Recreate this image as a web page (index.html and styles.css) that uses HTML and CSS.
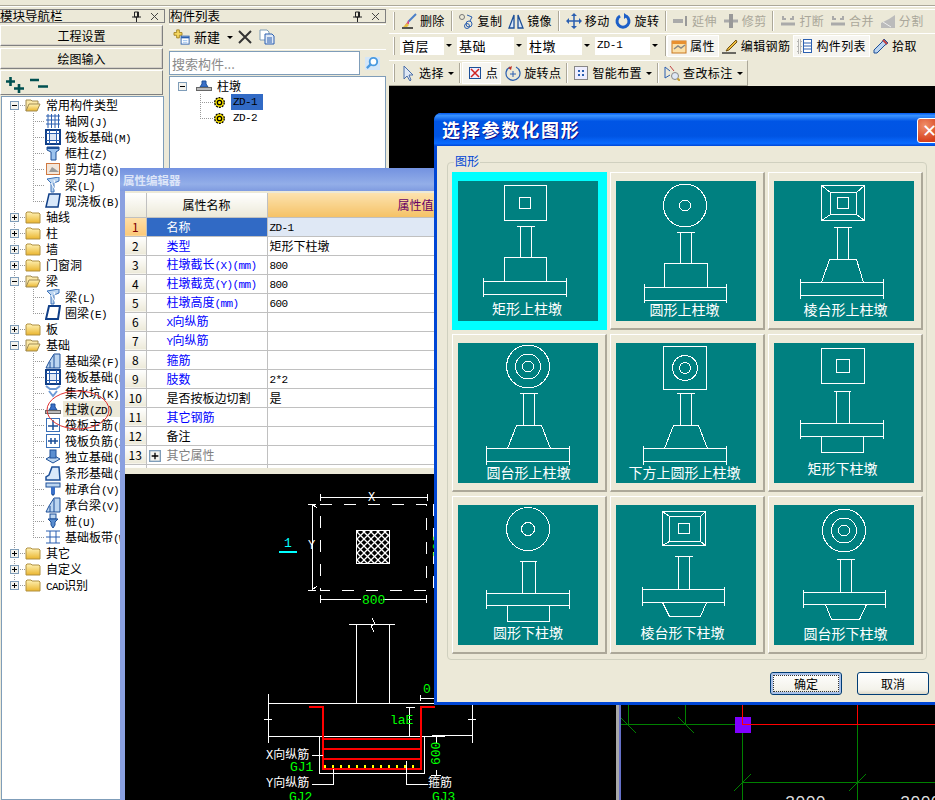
FILE: index.html
```html
<!DOCTYPE html>
<html lang="zh-CN">
<head>
<meta charset="utf-8">
<title>柱墩</title>
<link rel="stylesheet" href="styles.css">
</head>
<body>
<svg class="defs" aria-hidden="true">
  <defs>
    <linearGradient id="gfold" x1="0" y1="0" x2="0" y2="1"><stop offset="0" stop-color="#fff3b8"/><stop offset="1" stop-color="#eab52e"/></linearGradient>
    <pattern id="hatch" width="7" height="7" patternUnits="userSpaceOnUse"><rect width="7" height="7" fill="#000"/><path d="M0 0L7 7M7 0L0 7" stroke="#fff" stroke-width="1.300"/></pattern>
    <symbol id="s-plus" viewBox="0 0 9 9"><rect x=".5" y=".5" width="8" height="8" fill="#f4f3ee" stroke="#7f9db9"/><path d="M2 4.5h5M4.5 2v5" stroke="#000"/></symbol>
    <symbol id="s-minus" viewBox="0 0 9 9"><rect x=".5" y=".5" width="8" height="8" fill="#f4f3ee" stroke="#7f9db9"/><path d="M2 4.5h5" stroke="#000"/></symbol>
    <symbol id="s-fc" viewBox="0 0 16 16"><path d="M1 14V4l1-1h4l1 1h7l1 1v9z" fill="url(#gfold)" stroke="#b09040"/></symbol>
    <symbol id="s-fo" viewBox="0 0 16 16"><path d="M1 14V3h5l1 1h6v3" fill="#fbe8a8" stroke="#a08a50"/><path d="M1 14l3-7h11l-3 7z" fill="url(#gfold)" stroke="#a08a50"/></symbol>
    <symbol id="i-grid" viewBox="0 0 16 16"><path d="M3 1v14M6.500 1v14M10 1v14M13.500 1v14M1 3h14M1 7h14M1 11h14" stroke="#2a5fb0" fill="none"/></symbol>
    <symbol id="i-raft" viewBox="0 0 16 16"><rect x="1" y="1" width="14" height="14" fill="#fff" stroke="#103f88" stroke-width="2"/><rect x="4.500" y="4.500" width="7" height="7" fill="#dfe8f5" stroke="#2a5fb0"/><path d="M1 4.500h14M1 11.500h14M4.500 1v14M11.500 1v14" stroke="#2a5fb0"/></symbol>
    <symbol id="i-col" viewBox="0 0 16 16"><path d="M2 2h12v3l-3 2v8H6V7L2 5z" fill="#9cc3ee" stroke="#1c4f98"/><path d="M2 3h12" stroke="#1c4f98" stroke-width="2"/></symbol>
    <symbol id="i-wall" viewBox="0 0 16 16"><rect x="1.500" y="2.500" width="13" height="11" fill="#f2e6da" stroke="#d07840"/><path d="M4 11l3-5 3 2 4 3z" fill="#9a9a9a"/></symbol>
    <symbol id="i-beam" viewBox="0 0 16 16"><path d="M2 2l12-2v4l-5 2v9H6V6z" fill="#bcd5f0" stroke="#3a70b8"/><path d="M6 6l5 8M9 3l3 10" stroke="#fff"/></symbol>
    <symbol id="i-slab" viewBox="0 0 16 16"><path d="M4 1h11l-2 13H1z" fill="#d9e8fa" stroke="#103f88" stroke-width="1.500"/></symbol>
    <symbol id="i-ring" viewBox="0 0 16 16"><path d="M4 1h11l-2 13H1z" fill="#fff" stroke="#103f88" stroke-width="2"/></symbol>
    <symbol id="i-bf" viewBox="0 0 16 16"><path d="M1 15l3-6 5-8h6v14H1z" fill="#bcd5f0" stroke="#1c4f98"/><path d="M5 9v6M9 2v13" stroke="#1c4f98"/></symbol>
    <symbol id="i-pit" viewBox="0 0 16 16"><path d="M1 1l4 3h6l4-3M4 6l4 5 4-5" fill="none" stroke="#6d9ad6" stroke-width="2"/></symbol>
    <symbol id="i-pier" viewBox="0 0 16 16"><path d="M6 3h4v3l2 3H4l2-3z" fill="#3a70c8" stroke="#1c4f98"/><rect x="0.500" y="9.500" width="15" height="3" fill="#bbb" stroke="#666"/></symbol>
    <symbol id="i-rm" viewBox="0 0 16 16"><rect x="1.500" y="1.500" width="13" height="13" fill="#fff" stroke="#3a70b8"/><path d="M8 3v10M3 9h10" stroke="#1c4f98" stroke-width="1.500"/></symbol>
    <symbol id="i-rn" viewBox="0 0 16 16"><rect x="1.500" y="1.500" width="13" height="13" fill="#fff" stroke="#3a70b8"/><path d="M3 8h10M6 5v6M10 5v6" stroke="#1c4f98" stroke-width="1.500"/></symbol>
    <symbol id="i-indep" viewBox="0 0 16 16"><path d="M1 10l7-4 7 4-7 4z" fill="#bcd5f0" stroke="#1c4f98"/><rect x="5" y="1" width="6" height="8" fill="#5a8ed0" stroke="#1c4f98"/></symbol>
    <symbol id="i-strip" viewBox="0 0 16 16"><path d="M1 15v-3l3-2 3-8h7l1 13z" fill="#d9e8fa" stroke="#1c4f98" stroke-width="1.500"/></symbol>
    <symbol id="i-cap" viewBox="0 0 16 16"><rect x="1" y="2" width="14" height="4" fill="#bcd5f0" stroke="#1c4f98"/><rect x="6" y="6" width="4" height="7" fill="#3a70c8"/><path d="M8 15l-2-2h4z" fill="#1c4f98"/></symbol>
    <symbol id="i-pile" viewBox="0 0 16 16"><rect x="5" y="1" width="6" height="5" fill="#bcd5f0" stroke="#1c4f98"/><path d="M3 6h10l-3 3v3l-2 3-2-3V9z" fill="#5a8ed0" stroke="#1c4f98"/></symbol>
    <symbol id="i-band" viewBox="0 0 16 16"><path d="M1 2h14M1 14h14M5 2v12M11 2v12M1 8h14" stroke="#2a5fb0" fill="none"/></symbol>
    <symbol id="i-zd" viewBox="0 0 11 11"><circle cx="5.500" cy="5.500" r="4.800" fill="#ffe800" stroke="#000" stroke-dasharray="2 1" stroke-width="1.300"/><circle cx="5.500" cy="5.500" r="2.200" fill="#ffe800" stroke="#000" stroke-width="1.300"/></symbol>
    <symbol id="t-del" viewBox="0 0 16 16"><path d="M15 1L7 9" stroke="#4a7ec8" stroke-width="2"/><path d="M8 7L4 12l4-1z" fill="#d84a8a"/><path d="M1 15h11" stroke="#222" stroke-width="1.500"/><path d="M2 14l4-4 2 2-2 2z" fill="#e8c040"/></symbol>
    <symbol id="t-copy" viewBox="0 0 16 16"><circle cx="4" cy="4" r="2.500" fill="none" stroke="#777"/><circle cx="11" cy="11" r="3" fill="none" stroke="#2a5fb0"/><circle cx="9" cy="13" r="2.500" fill="none" stroke="#2a5fb0"/><path d="M9 2l5 2-2 4" fill="none" stroke="#2a5fb0"/></symbol>
    <symbol id="t-mir" viewBox="0 0 16 16"><path d="M6 2L1 15h5zM10 2l5 13h-5z" fill="#d9e8fa" stroke="#1c4f98" stroke-width="1.300"/></symbol>
    <symbol id="t-move" viewBox="0 0 16 16"><path d="M8 1v14M1 8h14" stroke="#2a5fb0" stroke-width="1.500"/><path d="M8 0l3 3H5zM8 16l3-3H5zM0 8l3-3v6zM16 8l-3-3v6z" fill="#2a5fb0"/></symbol>
    <symbol id="t-rot" viewBox="0 0 16 16"><path d="M5 3a6 6 0 1 0 6 0" fill="none" stroke="#1c5fc8" stroke-width="3"/><path d="M9 0v6l4-3z" fill="#1c5fc8"/></symbol>
    <symbol id="t-ext" viewBox="0 0 16 16"><path d="M0 8h10" stroke="#aaa" stroke-width="4"/><path d="M13 3v10" stroke="#999" stroke-width="2"/></symbol>
    <symbol id="t-trim" viewBox="0 0 16 16"><path d="M1 8h14" stroke="#aaa" stroke-width="3"/><path d="M8 1v14" stroke="#999" stroke-width="4"/></symbol>
    <symbol id="t-brk" viewBox="0 0 16 16"><path d="M1 11h14" stroke="#aaa" stroke-width="3"/><path d="M3 6h3M10 6h3M3 3v4M13 3v4" stroke="#aaa" stroke-width="2"/></symbol>
    <symbol id="t-seg" viewBox="0 0 16 16"><path d="M1 15V10l8-4 6-4v13z" fill="#bbb"/><path d="M3 9l8 5" stroke="#eee"/></symbol>
    <symbol id="t-prop" viewBox="0 0 16 16"><rect x="1" y="3" width="14" height="12" fill="#fbe0a8" stroke="#c87820"/><path d="M1 3h14v3H1z" fill="#e89030"/><path d="M3 11l4-3 3 2 4-3" stroke="#888" fill="none" stroke-width="1.500"/></symbol>
    <symbol id="t-rebar" viewBox="0 0 16 16"><path d="M14 2L6 10l-2 3 3-1 8-8z" fill="#f0c040" stroke="#705010"/><path d="M0 15h14" stroke="#222" stroke-width="1.300"/></symbol>
    <symbol id="t-list" viewBox="0 0 16 16"><path d="M1 2h3v3H1zM1 7h3v3H1zM1 12h3v3H1z" fill="none" stroke="#777" stroke-dasharray="1 1"/><rect x="6.500" y="1.500" width="8" height="13" fill="#fff" stroke="#2a5fb0"/><path d="M7 5h7M7 8h7M7 11h7" stroke="#2a5fb0"/></symbol>
    <symbol id="t-pick" viewBox="0 0 16 16"><path d="M11 1l4 4-3 2-8 8H1v-3l8-8z" fill="#bcd5f0" stroke="#1c4f98"/><path d="M10 2l4 4" stroke="#c04040" stroke-width="2"/></symbol>
    <symbol id="t-sel" viewBox="0 0 16 16"><path d="M4 1v13l3-3 3 5 1-1-2-5h4z" fill="#dfe8f5" stroke="#4a6ea8"/></symbol>
    <symbol id="t-pt" viewBox="0 0 16 16"><rect x="2.500" y="2.500" width="11" height="11" fill="#eef" stroke="#1c4f98"/><path d="M4 4l8 8M12 4l-8 8" stroke="#d02020" stroke-width="1.500"/></symbol>
    <symbol id="t-rpt" viewBox="0 0 16 16"><path d="M5 2a7 7 0 1 0 6 0" fill="none" stroke="#2a5fb0" stroke-width="1.200"/><path d="M7 1L3 3l3 2z" fill="#c03020"/><path d="M8 6v6M5 9h6" stroke="#2a5fb0"/></symbol>
    <symbol id="t-smart" viewBox="0 0 16 16"><rect x="1.500" y="1.500" width="13" height="13" fill="#eef" stroke="#222" stroke-dasharray="1 1"/><path d="M5 5h2v2H5zM9 9h2v2H9zM9 5h2v2H9zM5 9h2v2H5z" fill="#2a5fb0"/></symbol>
    <symbol id="t-chk" viewBox="0 0 16 16"><circle cx="11" cy="11" r="3.500" fill="#dfe8f5" stroke="#888"/><path d="M13.500 13.500L16 16" stroke="#c8a030" stroke-width="2"/><path d="M1 2v11M1 2l5 4M1 13l5-3" stroke="#2a5fb0" fill="none"/><path d="M6 1l4 5" stroke="#c04040"/></symbol>
    <symbol id="t-new" viewBox="0 0 18 18"><path d="M3 1h3v3h3v3H6v3H3V7H0V4h3z" fill="#f6d860" stroke="#a08020"/><rect x="8" y="8" width="9" height="9" fill="#fff" stroke="#2a5fb0"/><path d="M8 9.500h9" stroke="#2a5fb0" stroke-width="2"/><path d="M10 13h5M10 15h5" stroke="#9cc3ee"/></symbol>
    <symbol id="t-x" viewBox="0 0 14 14"><path d="M1 1l12 12M13 1L1 13" stroke="#333" stroke-width="2"/></symbol>
    <symbol id="t-dup" viewBox="0 0 16 16"><path d="M1 1h7l2 2v8H1z" fill="#fff" stroke="#7f9db9"/><path d="M6 5h7l2 2v8H6z" fill="#dfe8f5" stroke="#2a5fb0"/><path d="M8 9h5M8 11h5M8 13h5" stroke="#2a5fb0"/></symbol>
    <symbol id="t-find" viewBox="0 0 16 16"><rect width="16" height="14" y="1" fill="#d4e6f8"/><circle cx="9" cy="6" r="4" fill="#fff" stroke="#4a9ae0" stroke-width="2"/><path d="M6 9l-4 4" stroke="#4a9ae0" stroke-width="2.500"/></symbol>
    <symbol id="t-pin" viewBox="0 0 9 11"><path d="M2.500 1h4v5h-4zM0 6h9M4.500 6v5" stroke="#222" fill="none"/><path d="M5.500 1v5" stroke="#222"/></symbol>
    <symbol id="t-close" viewBox="0 0 9 9"><path d="M1 1l7 7M8 1L1 8" stroke="#444"/></symbol>
    <symbol id="s-expall" viewBox="0 0 18 16"><path d="M0 4.500h9M4.500 0v9M8 11.500h10M13 7v9" stroke="#005050" stroke-width="2.600"/></symbol>
    <symbol id="s-colall" viewBox="0 0 18 16"><path d="M0 3h9M8 9.500h10" stroke="#005050" stroke-width="2.600"/></symbol>
  </defs>
</svg>

<div class="app">
  <div class="topline"></div>
  <div class="main">
    <section class="nav">
      <header class="ptitle"><h2>模块导航栏</h2><svg class="pin"><use href="#t-pin"/></svg><svg class="close"><use href="#t-close"/></svg></header>
      <button class="navbtn first">工程设置</button>
      <button class="navbtn">绘图输入</button>
      <div class="navtools"><svg class="w18"><use href="#s-expall"/></svg><svg class="w18"><use href="#s-colall"/></svg></div>
      <div class="tree navtree">
        <div class="row root"><svg class="exp"><use href="#s-minus"/></svg><svg class="ico"><use href="#s-fo"/></svg><span>常用构件类型</span></div>
        <div class="kids">
          <div class="row kid"><svg class="ico"><use href="#i-grid"/></svg><span>轴网<b class="lat">(J)</b></span></div>
          <div class="row kid"><svg class="ico"><use href="#i-raft"/></svg><span>筏板基础<b class="lat">(M)</b></span></div>
          <div class="row kid"><svg class="ico"><use href="#i-col"/></svg><span>框柱<b class="lat">(Z)</b></span></div>
          <div class="row kid"><svg class="ico"><use href="#i-wall"/></svg><span>剪力墙<b class="lat">(Q)</b></span></div>
          <div class="row kid"><svg class="ico"><use href="#i-beam"/></svg><span>梁<b class="lat">(L)</b></span></div>
          <div class="row kid"><svg class="ico"><use href="#i-slab"/></svg><span>现浇板<b class="lat">(B)</b></span></div>
        </div>
        <div class="row root"><svg class="exp"><use href="#s-plus"/></svg><svg class="ico"><use href="#s-fc"/></svg><span>轴线</span></div>
        <div class="row root"><svg class="exp"><use href="#s-plus"/></svg><svg class="ico"><use href="#s-fc"/></svg><span>柱</span></div>
        <div class="row root"><svg class="exp"><use href="#s-plus"/></svg><svg class="ico"><use href="#s-fc"/></svg><span>墙</span></div>
        <div class="row root"><svg class="exp"><use href="#s-plus"/></svg><svg class="ico"><use href="#s-fc"/></svg><span>门窗洞</span></div>
        <div class="row root"><svg class="exp"><use href="#s-minus"/></svg><svg class="ico"><use href="#s-fo"/></svg><span>梁</span></div>
        <div class="kids">
          <div class="row kid"><svg class="ico"><use href="#i-beam"/></svg><span>梁<b class="lat">(L)</b></span></div>
          <div class="row kid"><svg class="ico"><use href="#i-ring"/></svg><span>圈梁<b class="lat">(E)</b></span></div>
        </div>
        <div class="row root"><svg class="exp"><use href="#s-plus"/></svg><svg class="ico"><use href="#s-fc"/></svg><span>板</span></div>
        <div class="row root"><svg class="exp"><use href="#s-minus"/></svg><svg class="ico"><use href="#s-fo"/></svg><span>基础</span></div>
        <div class="kids">
          <div class="row kid"><svg class="ico"><use href="#i-bf"/></svg><span>基础梁<b class="lat">(F)</b></span></div>
          <div class="row kid"><svg class="ico"><use href="#i-raft"/></svg><span>筏板基础<b class="lat">(M)</b></span></div>
          <div class="row kid"><svg class="ico"><use href="#i-pit"/></svg><span>集水坑<b class="lat">(K)</b></span></div>
          <div class="row kid"><svg class="ico"><use href="#i-pier"/></svg><span class="sel">柱墩<b class="lat">(ZD)</b></span></div>
          <div class="row kid"><svg class="ico"><use href="#i-rm"/></svg><span>筏板主筋<b class="lat">(R)</b></span></div>
          <div class="row kid"><svg class="ico"><use href="#i-rn"/></svg><span>筏板负筋<b class="lat">(X)</b></span></div>
          <div class="row kid"><svg class="ico"><use href="#i-indep"/></svg><span>独立基础<b class="lat">(D)</b></span></div>
          <div class="row kid"><svg class="ico"><use href="#i-strip"/></svg><span>条形基础<b class="lat">(T)</b></span></div>
          <div class="row kid"><svg class="ico"><use href="#i-cap"/></svg><span>桩承台<b class="lat">(V)</b></span></div>
          <div class="row kid"><svg class="ico"><use href="#i-bf"/></svg><span>承台梁<b class="lat">(V)</b></span></div>
          <div class="row kid"><svg class="ico"><use href="#i-pile"/></svg><span>桩<b class="lat">(U)</b></span></div>
          <div class="row kid"><svg class="ico"><use href="#i-band"/></svg><span>基础板带<b class="lat">(W)</b></span></div>
        </div>
        <div class="row root"><svg class="exp"><use href="#s-plus"/></svg><svg class="ico"><use href="#s-fc"/></svg><span>其它</span></div>
        <div class="row root"><svg class="exp"><use href="#s-plus"/></svg><svg class="ico"><use href="#s-fc"/></svg><span>自定义</span></div>
        <div class="row root"><svg class="exp"><use href="#s-plus"/></svg><svg class="ico"><use href="#s-fc"/></svg><span><b class="lat">CAD</b>识别</span></div>
        <svg class="circle" width="70" height="44" viewBox="0 0 70 44"><ellipse cx="34" cy="21" rx="31" ry="19" fill="none" stroke="#e03030"/></svg>
      </div>
    </section>

    <section class="list">
      <header class="ptitle"><h2>构件列表</h2><svg class="pin"><use href="#t-pin"/></svg><svg class="close"><use href="#t-close"/></svg></header>
      <div class="listtools">
        <svg class="w18"><use href="#t-new"/></svg><span>新建</span><i class="arrow"></i>
        <svg class="w14 mx"><use href="#t-x"/></svg><svg class="ico"><use href="#t-dup"/></svg>
      </div>
      <div class="search"><input class="input" placeholder="搜索构件..."><svg class="ico"><use href="#t-find"/></svg></div>
      <div class="tree listtree">
        <div class="row lroot"><svg class="exp"><use href="#s-minus"/></svg><svg class="ico"><use href="#i-pier"/></svg><span>柱墩</span></div>
        <div class="lkids">
          <div class="row lkid"><svg class="zd"><use href="#i-zd"/></svg><span class="zdname on">ZD-1</span></div>
          <div class="row lkid"><svg class="zd"><use href="#i-zd"/></svg><span class="zdname">ZD-2</span></div>
        </div>
      </div>
    </section>

    <section class="work">
      <div class="tb tb1">
        <i class="grip"></i>
        <div class="tool"><svg class="ico"><use href="#t-del"/></svg>删除</div><i class="sep"></i>
        <div class="tool"><svg class="ico"><use href="#t-copy"/></svg>复制</div>
        <div class="tool"><svg class="ico"><use href="#t-mir"/></svg>镜像</div><i class="sep"></i>
        <div class="tool"><svg class="ico"><use href="#t-move"/></svg>移动</div>
        <div class="tool"><svg class="ico"><use href="#t-rot"/></svg>旋转</div><i class="sep"></i>
        <div class="tool off"><svg class="ico"><use href="#t-ext"/></svg>延伸</div>
        <div class="tool off"><svg class="ico"><use href="#t-trim"/></svg>修剪</div><i class="sep"></i>
        <div class="tool off"><svg class="ico"><use href="#t-brk"/></svg>打断</div>
        <div class="tool off"><svg class="ico"><use href="#t-brk"/></svg>合并</div>
        <div class="tool off"><svg class="ico"><use href="#t-seg"/></svg>分割</div>
      </div>
      <div class="tb tb2">
        <i class="grip"></i>
        <div class="combo c1"><span>首层</span><i class="drop"></i></div>
        <div class="combo c2"><span>基础</span><i class="drop"></i></div>
        <div class="combo c3"><span>柱墩</span><i class="drop"></i></div>
        <div class="combo c4"><span class="lat">ZD-1</span><i class="drop"></i></div>
        <i class="sep"></i>
        <div class="tool on"><svg class="ico"><use href="#t-prop"/></svg>属性</div>
        <div class="tool"><svg class="ico"><use href="#t-rebar"/></svg>编辑钢筋</div>
        <div class="tool on"><svg class="ico"><use href="#t-list"/></svg>构件列表</div>
        <div class="tool"><svg class="ico"><use href="#t-pick"/></svg>拾取</div>
      </div>
      <div class="tb tb3">
        <i class="grip"></i>
        <div class="tool"><svg class="ico"><use href="#t-sel"/></svg>选择<i class="arrow"></i></div><i class="sep"></i>
        <div class="tool on"><svg class="ico"><use href="#t-pt"/></svg>点</div>
        <div class="tool"><svg class="ico"><use href="#t-rpt"/></svg>旋转点</div><i class="sep"></i>
        <div class="tool"><svg class="ico"><use href="#t-smart"/></svg>智能布置<i class="arrow"></i></div><i class="sep"></i>
        <div class="tool"><svg class="ico"><use href="#t-chk"/></svg>查改标注<i class="arrow"></i></div>
      </div>
      <div class="canvas">
        <svg class="fill cad" viewBox="389 86 546 714">
          <path d="M621 724H742M628 705V724M685 705V724M742 724V800M857 724V800M742 782H935" stroke="#008000" fill="none"/>
          <path d="M742 705V724H935M857 705V724" stroke="#ff0000" fill="none"/>
          <path d="M621 718L636 733M678 717L694 733M734 791L751 774M849 791L866 774" stroke="#008000"/>
          <rect x="735" y="717" width="16" height="16" fill="#8000ff"/>
          <path d="M742 717V724H751" stroke="#ff0000" fill="none"/>
          <text class="dim" x="785" y="807">3000</text>
          <text class="dim" x="900" y="807">3000</text>
        </svg>
      </div>
    </section>
  </div>

  <!-- floating property editor -->
  <section class="propwin">
    <header class="wtitle">属性编辑器</header>
    <div class="pbody">
      <div class="tablewrap">
        <table class="ptable">
          <colgroup><col class="cn"><col class="cname"><col></colgroup>
          <thead><tr><th class="num"></th><th>属性名称</th><th class="valh">属性值</th></tr></thead>
          <tbody>
            <tr class="cur"><td class="num">1</td><td class="name">名称</td><td><b class="lat">ZD-1</b></td></tr>
            <tr><td class="num">2</td><td class="name blue">类型</td><td>矩形下柱墩</td></tr>
            <tr><td class="num">3</td><td class="name blue">柱墩截长<b class="lat">(X)(mm)</b></td><td><b class="lat">800</b></td></tr>
            <tr><td class="num">4</td><td class="name blue">柱墩截宽<b class="lat">(Y)(mm)</b></td><td><b class="lat">800</b></td></tr>
            <tr><td class="num">5</td><td class="name blue">柱墩高度<b class="lat">(mm)</b></td><td><b class="lat">600</b></td></tr>
            <tr><td class="num">6</td><td class="name blue"><b class="lat">X</b>向纵筋</td><td></td></tr>
            <tr><td class="num">7</td><td class="name blue"><b class="lat">Y</b>向纵筋</td><td></td></tr>
            <tr><td class="num">8</td><td class="name blue">箍筋</td><td></td></tr>
            <tr><td class="num">9</td><td class="name blue">肢数</td><td><b class="lat">2*2</b></td></tr>
            <tr><td class="num">10</td><td class="name">是否按板边切割</td><td>是</td></tr>
            <tr><td class="num">11</td><td class="name blue">其它钢筋</td><td></td></tr>
            <tr><td class="num">12</td><td class="name">备注</td><td></td></tr>
            <tr><td class="num">13</td><td class="name grey"><svg class="pexp"><use href="#s-plus"/></svg>其它属性</td><td></td></tr>
            <tr><td class="num"></td><td class="name"></td><td></td></tr>
          </tbody>
        </table>
      </div>
      <div class="preview">
        <svg class="fill cad" viewBox="125 474 491 326">
          <!-- plan -->
          <path d="M320 497H427M320 494V501M427 494V501M312 504V590M308 504H316M308 590H316M320 599H361M383 599H426M320 595V603M426 595V603M312 504l5 4M312 590l5-4" stroke="#fff" fill="none"/>
          <rect x="320" y="504" width="106" height="86" fill="none" stroke="#fff" stroke-dasharray="12 12"/>
          <path d="M433 504V590" stroke="#fff" stroke-dasharray="12 12"/>
          <rect x="356.500" y="530.500" width="33" height="33" fill="url(#hatch)" stroke="#fff"/>
          <text class="tw m" x="368" y="501">X</text>
          <text class="tw m" x="308" y="549">Y</text>
          <text class="tc m" x="284" y="547">1</text>
          <path d="M279 551.500H297" stroke="#00ffff" stroke-width="2"/>
          <text class="tg m" x="362" y="604">800</text>
          <text class="tg m" transform="rotate(-90 442 558)" x="442" y="558">800</text>
          <!-- section -->
          <path d="M349 624H395M356 624V703M389 624V703M372 618l3 6-4 2 3 6" stroke="#fff" fill="none"/>
          <path d="M268 694V743M264 719H272M268 703H445M268 736H445M319 736V773H424V736M472 705V743M468 719H476M432 735H472" stroke="#fff" fill="none"/>
          <path d="M309 707H323V769H421V707H435M323 739H421M323 749H421M323 759H421" stroke="#ff0000" stroke-width="2" fill="none"/>
          <path d="M324 766H418" stroke="#ffff00" stroke-width="3" stroke-dasharray="2 6"/>
          <path d="M409 707V737M406 707H415M420 698H434M420 695V701" stroke="#fff" fill="none"/>
          <path d="M312 755H323M312 784H333V769M406 761V784H428M436 736V743M436 770V775M431 775H441" stroke="#fff" fill="none"/>
          <text class="tg m" x="423" y="693">0</text>
          <text class="tg m" x="390" y="724">laE</text>
          <text class="tg m" transform="rotate(-90 440 765)" x="440" y="765">600</text>
          <text class="tw" x="266" y="759"><tspan class="mt">X</tspan>向纵筋</text>
          <text class="tg m" x="290" y="771">GJ1</text>
          <text class="tw" x="266" y="787"><tspan class="mt">Y</tspan>向纵筋</text>
          <text class="tg m" x="289" y="801">GJ2</text>
          <text class="tw" x="428" y="787">箍筋</text>
          <text class="tg m" x="432" y="801">GJ3</text>
        </svg>
      </div>
    </div>
  </section>

  <!-- modal dialog -->
  <section class="dialog">
    <header class="dtitle"><h1>选择参数化图形</h1><button class="xbtn">✕</button></header>
    <fieldset class="group">
      <legend>图形</legend>
      <div class="cards">
        <div class="card sel1"><svg class="tile" viewBox="0 0 140 140">
          <path d="M46.500 4.500H88.500V39.500H46.500zM61.500 16.500H72.500V27.500H61.500zM58.500 45.500H76.500M62.500 45.500V76.500M73.500 45.500V76.500M46.500 100.500V76.500H88.500V100.500M25.500 100.500H108.500M25.500 113.500H108.500M25.500 97V116M108.500 97V116"/>
          <text x="69" y="133">矩形上柱墩</text></svg></div>
        <div class="card"><svg class="tile" viewBox="0 0 140 140">
          <circle cx="69" cy="24.500" r="21.500"/><circle cx="69" cy="24.500" r="5.500"/>
          <path d="M60.500 51.500H78.500M64.500 51.500V82.500M75.500 51.500V82.500M48.500 106.500V82.500H91.500V106.500M28.500 106.500H110.500M28.500 119.500H110.500M28.500 103V122M110.500 103V122"/>
          <text x="68.500" y="134">圆形上柱墩</text></svg></div>
        <div class="card"><svg class="tile" viewBox="0 0 140 140">
          <path d="M47.500 4.500H90.500V39.500H47.500zM56.500 11.500H82.500V33.500H56.500zM63.500 16.500H74.500V27.500H63.500zM47.500 4.500L56.500 11.500M90.500 4.500L82.500 11.500M47.500 39.500L56.500 33.500M90.500 39.500L82.500 33.500M59.500 46.500H77.500M63.500 46.500V78.500M74.500 46.500V78.500M55.500 78.500H82.500M55.500 78.500L47.500 101.500M82.500 78.500L89.500 101.500M26.500 101.500H109.500M26.500 114.500H109.500M26.500 98V118M109.500 98V118"/>
          <text x="71.500" y="134">棱台形上柱墩</text></svg></div>
        <div class="card"><svg class="tile" viewBox="0 0 140 140">
          <circle cx="70" cy="23.500" r="21.500"/><circle cx="70" cy="23.500" r="12.500"/><circle cx="70" cy="23.500" r="5.500"/>
          <path d="M61.500 50.500H79.500M65.500 50.500V82.500M76.500 50.500V82.500M58.500 82.500H83.500M58.500 82.500L49.500 105.500M83.500 82.500L92.500 105.500M28.500 105.500H111.500M28.500 118.500H111.500M28.500 103V122M111.500 103V122"/>
          <text x="70.500" y="135">圆台形上柱墩</text></svg></div>
        <div class="card"><svg class="tile" viewBox="0 0 140 140">
          <path d="M47.500 3.500H90.500V46.500H47.500z"/><circle cx="69" cy="25" r="12.500"/><circle cx="69" cy="25" r="5.500"/>
          <path d="M60.500 50.500H78.500M64.500 50.500V82.500M75.500 50.500V82.500M57.500 82.500H82.500M57.500 82.500L48.500 105.500M82.500 82.500L91.500 105.500M27.500 105.500H110.500M27.500 118.500H110.500M27.500 103V122M110.500 103V122"/>
          <text x="68.500" y="135">下方上圆形上柱墩</text></svg></div>
        <div class="card"><svg class="tile" viewBox="0 0 140 140">
          <path d="M47.500 5.500H90.500V40.500H47.500zM62.500 16.500H75.500V29.500H62.500zM59.500 48.500H76.500M62.500 48.500V80.500M75.500 48.500V80.500M26.500 80.500H109.500M26.500 93.500H109.500M26.500 77V96M109.500 77V96M47.500 93.500V109.500H89.500V93.500"/>
          <text x="68.500" y="131">矩形下柱墩</text></svg></div>
        <div class="card"><svg class="tile" viewBox="0 0 140 140">
          <circle cx="70" cy="24" r="21.500"/><circle cx="70" cy="24" r="6.500"/>
          <path d="M61.500 56.500H78.500M64.500 56.500V88.500M77.500 56.500V88.500M28.500 88.500H111.500M28.500 100.500H111.500M28.500 85V104M111.500 85V104M49.500 100.500V116.500H91.500V100.500"/>
          <text x="70" y="133">圆形下柱墩</text></svg></div>
        <div class="card"><svg class="tile" viewBox="0 0 140 140">
          <path d="M46.500 6.500H89.500V40.500H46.500zM53.500 11.500H84.500V36.500H53.500zM62.500 18.500H73.500V28.500H62.500zM46.500 6.500L53.500 11.500M89.500 6.500L84.500 11.500M46.500 40.500L53.500 36.500M89.500 40.500L84.500 36.500M58.500 51.500H76.500M62.500 51.500V84.500M73.500 51.500V84.500M26.500 84.500H108.500M26.500 97.500H108.500M26.500 82V101M108.500 82V101M46.500 97.500L53.500 111.500H84.500L90.500 97.500"/>
          <text x="66.500" y="133">棱台形下柱墩</text></svg></div>
        <div class="card"><svg class="tile" viewBox="0 0 140 140">
          <circle cx="70" cy="25.500" r="21.500"/><circle cx="70" cy="25.500" r="12.500"/><circle cx="70" cy="25.500" r="5.500"/>
          <path d="M62.500 54.500H80.500M66.500 54.500V87.500M77.500 54.500V87.500M29.500 87.500H111.500M29.500 99.500H111.500M29.500 85V103M111.500 85V103M51.500 99.500L57.500 114.500H85.500L92.500 99.500"/>
          <text x="71.500" y="134">圆台形下柱墩</text></svg></div>
      </div>
    </fieldset>
    <div class="dactions">
      <button class="xpbtn focus">确定</button>
      <button class="xpbtn">取消</button>
    </div>
  </section>
</div>
</body>
</html>
```

FILE: styles.css
```css
* { box-sizing: border-box; }
html, body { margin: 0; padding: 0; }
body { width: 935px; height: 800px; overflow: hidden; background: #ece9d8; font: 12px/16px "Noto Sans CJK SC", sans-serif; color: #000; }
.defs { display: block; width: 0; height: 0; }
.app { position: relative; width: 935px; height: 800px; overflow: hidden; }
svg { display: block; flex: none; }
.lat { font: 400 11px/1 "Liberation Mono", monospace; letter-spacing: -.6px; }
h1, h2 { margin: 0; font: inherit; }

.topline { height: 9px; border-bottom: 0; background: linear-gradient(#ece9d8 0 5px, #aca899 5px 6px, #fff 6px 7px, #ece9d8 7px); }
.main { display: grid; grid-template-columns: 168px 221px 546px; height: 791px; }

/* panel title */
.ptitle { display: flex; align-items: center; height: 14px; border: 1px solid #808080; border-width: 1px 1px 1px 0; background: #ece9d8; font-size: 12.500px; line-height: 12px; }
.ptitle h2 { flex: 1; white-space: nowrap; }
.pin { width: 9px; height: 11px; margin-right: 9px; }
.close { width: 9px; height: 9px; margin-right: 5px; }

/* navigator */
.nav { display: flex; flex-direction: column; padding-right: 3px; min-height: 0; }
.navbtn { display: block; height: 21px; margin: 1px 2px 1px 0; padding: 0; font: inherit; background: #ece9d8; border: 1px solid; border-color: #fff #808080 #808080 #fff; box-shadow: inset -1px -1px 0 #d4d0c8; }
.navbtn.first { margin-top: 2px; }
.navtools { display: flex; gap: 6px; height: 25px; margin: 0 2px 1px 0; padding: 6px 0 0 5px; border: 1px solid; border-color: #fff #808080 #808080 #fff; }
.w18 { width: 18px; height: 16px; }
.w14 { width: 14px; height: 14px; }

.tree { position: relative; background-color: #fff; border: 1px solid #7f9db9; overflow: hidden; }
.navtree { flex: 1; margin: 0 1px 0 1px; min-height: 0;
  background-image: repeating-linear-gradient(#999 0 1px, transparent 1px 2px);
  background-repeat: no-repeat; background-position: 12px 8px; background-size: 1px 481px; }
.row { display: flex; align-items: center; height: 16px; white-space: nowrap; }
.root { padding-left: 8px; background: repeating-linear-gradient(90deg, #999 0 1px, transparent 1px 2px) no-repeat 16px 8px / 8px 1px; }
.exp { width: 9px; height: 9px; margin-right: 6px; }
.ico { width: 16px; height: 16px; }
.root .ico { margin-right: 5px; }
.kids { background: repeating-linear-gradient(#999 0 1px, transparent 1px 2px) no-repeat 31px 0 / 1px calc(100% - 8px); }
.kid { padding-left: 43px; background: repeating-linear-gradient(90deg, #999 0 1px, transparent 1px 2px) no-repeat 31px 8px / 12px 1px; }
.kid .ico { margin-right: 4px; }
.sel { background: #ece9d8; margin-left: -2px; padding: 0 8px 0 2px; }
.circle { position: absolute; left: 42px; top: 292px; }

/* component list */
.list { display: flex; flex-direction: column; padding: 0 3px 0 1px; min-height: 0; }
.list .ptitle { border-left-width: 1px; }
.listtools { display: flex; align-items: center; height: 26px; margin-top: 1px; padding-left: 4px; border-top: 1px solid #fff; border-bottom: 1px solid #fff; font-size: 13px; }
.listtools span { margin-left: 3px; }
.arrow { display: inline-block; width: 0; height: 0; margin-left: 1px; border: 3px solid transparent; border-top: 3px solid #000; border-bottom: 0; align-self: center; flex: none; }
.listtools .arrow { margin-left: 7px; }
.mx { margin: 0 7px 0 5px; }
.search { display: flex; align-items: center; gap: 5px; height: 24px; margin-top: 1px; }
.input { width: 191px; height: 24px; padding: 0 2px; border: 1px solid #7f9db9; background: #fff; font: 13px "Noto Sans CJK SC", sans-serif; margin-left: 0; }
.input::placeholder { color: #8a8a8a; opacity: 1; }
.search .ico { width: 15px; height: 15px; }
.listtree { flex: 1; margin-top: 1px; padding-top: 1px; min-height: 0; }
.lroot { padding-left: 8px; }
.lroot .exp { margin-right: 9px; }
.lroot .ico { margin-right: 5px; }
.lkids { background: repeating-linear-gradient(#999 0 1px, transparent 1px 2px) no-repeat 30px 0 / 1px calc(100% - 8px); }
.lkid { padding-left: 44px; background: repeating-linear-gradient(90deg, #999 0 1px, transparent 1px 2px) no-repeat 30px 8px / 14px 1px; }
.zd { width: 11px; height: 11px; margin-right: 6px; }
.zdname { font: 11px/16px "Liberation Mono", monospace; letter-spacing: -.6px; padding: 0 6px 0 2px; }
.zdname.on { background: #316ac5; color: #000; }

/* toolbars */
.work { display: flex; flex-direction: column; min-width: 0; min-height: 0; }
.tb { display: flex; align-items: center; padding-left: 4px; white-space: nowrap; overflow: hidden; letter-spacing: .4px; flex: none; }
.tb1 { height: 22px; gap: 5.900px; border-top: 1px solid #fff; }
.tb2 { height: 24px; margin-top: 2px; border-top: 1px solid #fff; }
.tb3 { height: 26px; margin-top: 3px; width: 359px; gap: 5px; border-bottom: 1px solid #aca899; border-top: 1px solid #fff; border-right: 1px solid #aca899; }
.grip { width: 2px; height: 18px; border-left: 1px solid #fff; border-right: 1px solid #aca899; flex: none; }
.tb2 .grip { margin-right: 5px; }
.sep { width: 2px; height: 20px; border-left: 1px solid #aca899; border-right: 1px solid #fff; flex: none; }
.tool { display: flex; align-items: center; gap: 3px; height: 20px; flex: none; }
.tool.off { color: #aaa79a; }
.tool.on { background: #f6f5f0; outline: 1px solid #fff; }

.combo { display: flex; align-items: center; height: 18px; flex: none; margin-right: 4px; background: #fff; padding-left: 2px; font-size: 13px; }
.combo span { flex: 1; }
.combo .lat { font-size: 11px; letter-spacing: -.2px; }
.drop { display: flex; align-items: center; justify-content: center; width: 9px; height: 18px; background: #ece9d8; flex: none; }
.drop::after { content: ""; border: 3px solid transparent; border-top: 3px solid #000; border-bottom: 0; }
.c1 { width: 53px; }
.c2 { width: 66px; }
.c3 { width: 64px; }
.c4 { width: 64px; margin-right: 6px; }
.tb2 .tool { padding: 0 2px; margin-left: 2px; }
.tb2 .tool.on { padding: 0 3px; }
.tb2 .sep + .tool { margin-left: 1px; }
.tb3 .tool.on { margin-left: -3px; padding: 0 2px 0 4px; }

.canvas { flex: 1; background: #000; min-height: 0; }
.fill { width: 100%; height: 100%; }
.cad { shape-rendering: crispEdges; }
.dim { font: 17px "Liberation Mono", monospace; fill: #ddd; }
.m { font-family: "Liberation Mono", monospace; font-size: 13px; }
.tw { fill: #fff; font-size: 12px; font-family: "Noto Sans CJK SC", sans-serif; }
.tw.m { font-family: "Liberation Mono", monospace; font-size: 12px; }
.mt { font-family: "Liberation Mono", monospace; }
.tg { fill: #00ff00; }
.tc { fill: #00ffff; }

/* property editor window */
.propwin { position: absolute; left: 120px; top: 168px; width: 501px; height: 632px; display: flex; flex-direction: column; border-left: 5px solid #8aa0e0; border-right: 2px solid #6670c8; background: #ece9d8; }
.wtitle { height: 23px; margin-left: -5px; margin-right: -2px; padding: 5px 0 0 3px; background: linear-gradient(#7392e0, #93aee8 70%, #7f9be0); color: #dde5f8; font-weight: 700; font-size: 11.500px; line-height: 14px; }
.pbody { flex: 1; display: flex; flex-direction: column; margin-top: 2px; min-height: 0; border-right: 3px solid #a8a8a8; }
.tablewrap { height: 275px; overflow: hidden; flex: none; background: #fff; }
.ptable { width: 100%; table-layout: fixed; border-collapse: collapse; background: #fff; }
.cn { width: 21px; }
.cname { width: 121px; }
.ptable th { height: 24px; padding: 0; font-weight: 400; line-height: 15px; background: linear-gradient(#fff, #ece9d8); border-right: 1px solid #c0c0c0; border-bottom: 1px solid #c0c0c0; }
.ptable th.valh { background: linear-gradient(#fce2ae, #f5c266); color: #660066; text-align: left; padding-left: 130px; border-right: 0; }
.ptable td { height: 19px; padding: 0 0 0 2px; border-bottom: 1px solid #c0c0c0; border-right: 1px solid #c0c0c0; line-height: 14px; white-space: nowrap; overflow: hidden; }
.ptable td.num { padding: 0; text-align: center; background: linear-gradient(#fff, #ece9d8); }
.ptable td.name { padding-left: 20px; }
.ptable td:last-child { border-right: 0; }
.blue { color: #0000ff; }
.grey { color: #808080; }
.pexp { display: inline-block; width: 12px; height: 12px; margin-left: -18px; margin-right: 6px; vertical-align: -2px; }
.cur td { background: #dfe8f5; }
.cur td.num { background: linear-gradient(#ffdfa8, #fbc97a); color: #800000; }
.cur td.name { background: #316ac5; color: #fff; }
.preview { flex: 1; margin-top: 6px; background: #000; min-height: 0; }

/* dialog */
.dialog { position: absolute; left: 434px; top: 113px; width: 520px; height: 592px; display: flex; flex-direction: column; background: #ece9d8; border: 3px solid #0046d5; border-top: 0; border-radius: 7px 7px 0 0; }
.dtitle { display: flex; align-items: flex-start; height: 33px; margin: 0 -3px; padding: 4px 0 0 8px; background: linear-gradient(#0058ee, #3a93ff 8%, #0055e5 25%, #0054e3 70%, #0a6bff 92%, #0046d5); border-radius: 7px 7px 0 0; flex: none; }
.dtitle h1 { width: 475px; color: #fff; font-weight: 700; font-size: 18px; line-height: 24px; letter-spacing: 1.800px; text-shadow: 1px 1px 0 #0f1089; }
.xbtn { width: 25px; height: 25px; margin-top: 1px; padding: 0; border: 1px solid #fff; border-radius: 3px; background: radial-gradient(circle at 30% 30%, #f0906a, #d6401c 70%); color: #fff; font: 700 18px/22px "DejaVu Sans", sans-serif; }
.group { width: 480px; margin: 8px 0 0 10px; padding: 1px 3px 0 4px; border: 1px solid #d0d0bf; border-radius: 4px; height: 506px; flex: none; min-width: 0; }
.group legend { margin-left: 2px; padding: 0 1px 4px; color: #0046d5; font-size: 12px; line-height: 13px; }
.cards { display: grid; grid-template-columns: repeat(3, 155px); grid-auto-rows: 158px; column-gap: 3px; row-gap: 4px; }
.card { padding: 8px 7px 8px 5px; border: 1px solid; border-color: #fff #aca899 #aca899 #fff; border-width: 1px 2px 2px 1px; background: #ece9d8; }
.card.sel1 { background: #00ffff; border-color: #00ffff; }
.tile { width: 140px; height: 140px; background: #008080; fill: none; stroke: #fff; shape-rendering: crispEdges; }
.tile text { fill: #fff; stroke: none; font-size: 14px; text-anchor: middle; }
.dactions { display: flex; gap: 15px; padding: 12px 0 0 333px; }
.xpbtn { width: 72px; height: 23px; padding: 0; font: 12px/16px "Noto Sans CJK SC", sans-serif; background: linear-gradient(#fff, #f3f2ea 80%, #dcd8c8); border: 1px solid #003c74; border-radius: 3px; }
.xpbtn.focus { box-shadow: inset 0 0 0 2px #a8c0e8; outline: 1px dotted #333; outline-offset: -4px; }
```
